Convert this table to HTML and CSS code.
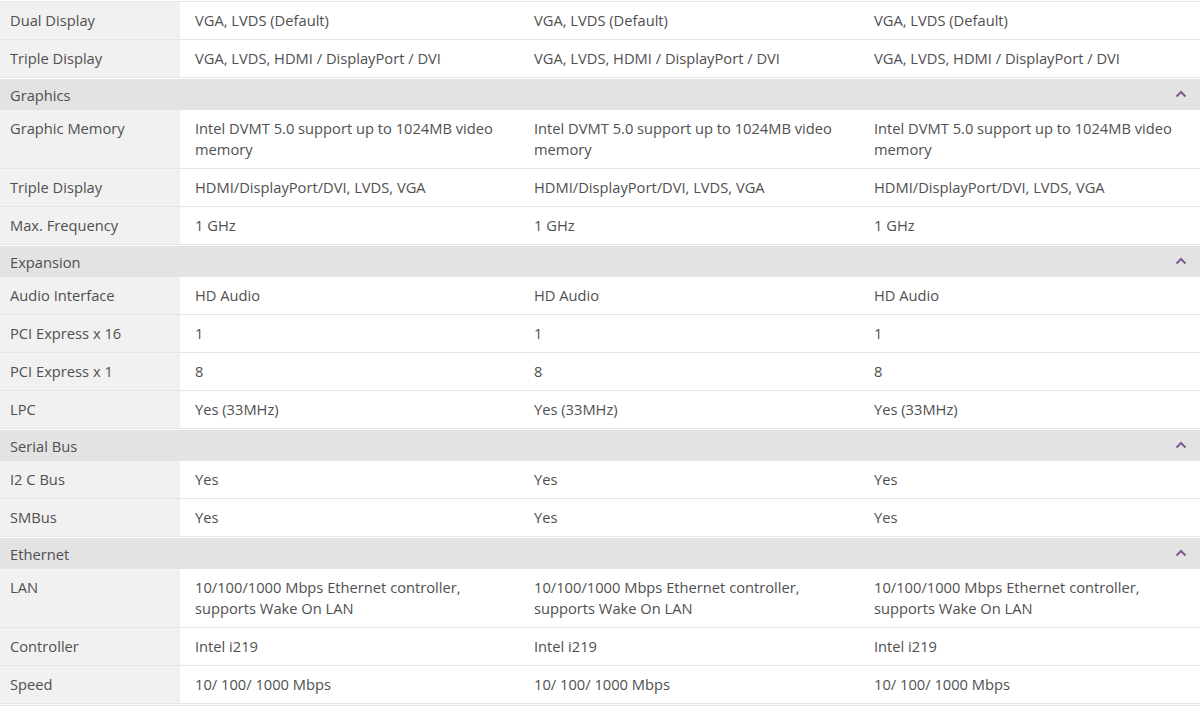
FILE: index.html
```html
<!DOCTYPE html>
<html lang="en">
<head>
<meta charset="utf-8">
<title>Specifications</title>
<link rel="stylesheet" href="styles.css">
</head>
<body>
<div class="spec">
  <section class="group group-first">
    <div class="row"><div class="label">Dual Display</div><div class="val">VGA, LVDS (Default)</div><div class="val">VGA, LVDS (Default)</div><div class="val">VGA, LVDS (Default)</div></div>
    <div class="row"><div class="label">Triple Display</div><div class="val">VGA, LVDS, HDMI / DisplayPort / DVI</div><div class="val">VGA, LVDS, HDMI / DisplayPort / DVI</div><div class="val">VGA, LVDS, HDMI / DisplayPort / DVI</div></div>
  </section>

  <section class="group">
    <div class="head"><span>Graphics</span><svg class="chev" width="12" height="8" viewBox="0 0 12 8"><polyline points="1.5,6.5 6,2 10.5,6.5" fill="none" stroke="#7b5b8f" stroke-width="2"/></svg></div>
    <div class="row"><div class="label">Graphic Memory</div><div class="val">Intel DVMT 5.0 support up to 1024MB video memory</div><div class="val">Intel DVMT 5.0 support up to 1024MB video memory</div><div class="val">Intel DVMT 5.0 support up to 1024MB video memory</div></div>
    <div class="row"><div class="label">Triple Display</div><div class="val">HDMI/DisplayPort/DVI, LVDS, VGA</div><div class="val">HDMI/DisplayPort/DVI, LVDS, VGA</div><div class="val">HDMI/DisplayPort/DVI, LVDS, VGA</div></div>
    <div class="row"><div class="label">Max. Frequency</div><div class="val">1 GHz</div><div class="val">1 GHz</div><div class="val">1 GHz</div></div>
  </section>

  <section class="group">
    <div class="head"><span>Expansion</span><svg class="chev" width="12" height="8" viewBox="0 0 12 8"><polyline points="1.5,6.5 6,2 10.5,6.5" fill="none" stroke="#7b5b8f" stroke-width="2"/></svg></div>
    <div class="row"><div class="label">Audio Interface</div><div class="val">HD Audio</div><div class="val">HD Audio</div><div class="val">HD Audio</div></div>
    <div class="row"><div class="label">PCI Express x 16</div><div class="val">1</div><div class="val">1</div><div class="val">1</div></div>
    <div class="row"><div class="label">PCI Express x 1</div><div class="val">8</div><div class="val">8</div><div class="val">8</div></div>
    <div class="row"><div class="label">LPC</div><div class="val">Yes (33MHz)</div><div class="val">Yes (33MHz)</div><div class="val">Yes (33MHz)</div></div>
  </section>

  <section class="group">
    <div class="head"><span>Serial Bus</span><svg class="chev" width="12" height="8" viewBox="0 0 12 8"><polyline points="1.5,6.5 6,2 10.5,6.5" fill="none" stroke="#7b5b8f" stroke-width="2"/></svg></div>
    <div class="row"><div class="label">I2 C Bus</div><div class="val">Yes</div><div class="val">Yes</div><div class="val">Yes</div></div>
    <div class="row"><div class="label">SMBus</div><div class="val">Yes</div><div class="val">Yes</div><div class="val">Yes</div></div>
  </section>

  <section class="group">
    <div class="head"><span>Ethernet</span><svg class="chev" width="12" height="8" viewBox="0 0 12 8"><polyline points="1.5,6.5 6,2 10.5,6.5" fill="none" stroke="#7b5b8f" stroke-width="2"/></svg></div>
    <div class="row"><div class="label">LAN</div><div class="val">10/100/1000 Mbps Ethernet controller, supports Wake On LAN</div><div class="val">10/100/1000 Mbps Ethernet controller, supports Wake On LAN</div><div class="val">10/100/1000 Mbps Ethernet controller, supports Wake On LAN</div></div>
    <div class="row"><div class="label">Controller</div><div class="val">Intel i219</div><div class="val">Intel i219</div><div class="val">Intel i219</div></div>
    <div class="row"><div class="label">Speed</div><div class="val">10/ 100/ 1000 Mbps</div><div class="val">10/ 100/ 1000 Mbps</div><div class="val">10/ 100/ 1000 Mbps</div></div>
  </section>

  <section class="group">
    <div class="head"></div>
  </section>
</div>
</body>
</html>
```

FILE: styles.css
```css
html, body {
  margin: 0;
  padding: 0;
  overflow: hidden;
  background: #fff;
}

body {
  font-family: "Open Sans", "Noto Sans", "Liberation Sans", sans-serif;
  font-size: 14.7px;
  color: #505050;
  padding-top: 1px;
}

.spec {
  width: 1200px;
}

.group + .group {
  margin-top: 1px;
}

.group-first {
  border-top: 1px solid #e6e6e6;
}

.head {
  display: flex;
  align-items: center;
  justify-content: space-between;
  height: 31px;
  padding: 0 13px 0 10px;
  background: #e3e3e3;
}

.chev {
  display: block;
  margin-top: -1px;
}

.row {
  display: grid;
  grid-template-columns: 180px 339px 340px 1fr;
  border-bottom: 1px solid #e6e6e6;
  line-height: 21px;
}

.label {
  background: #f1f1f1;
  padding: 8px 10px;
}

.val {
  padding: 8px 15px;
}
```
